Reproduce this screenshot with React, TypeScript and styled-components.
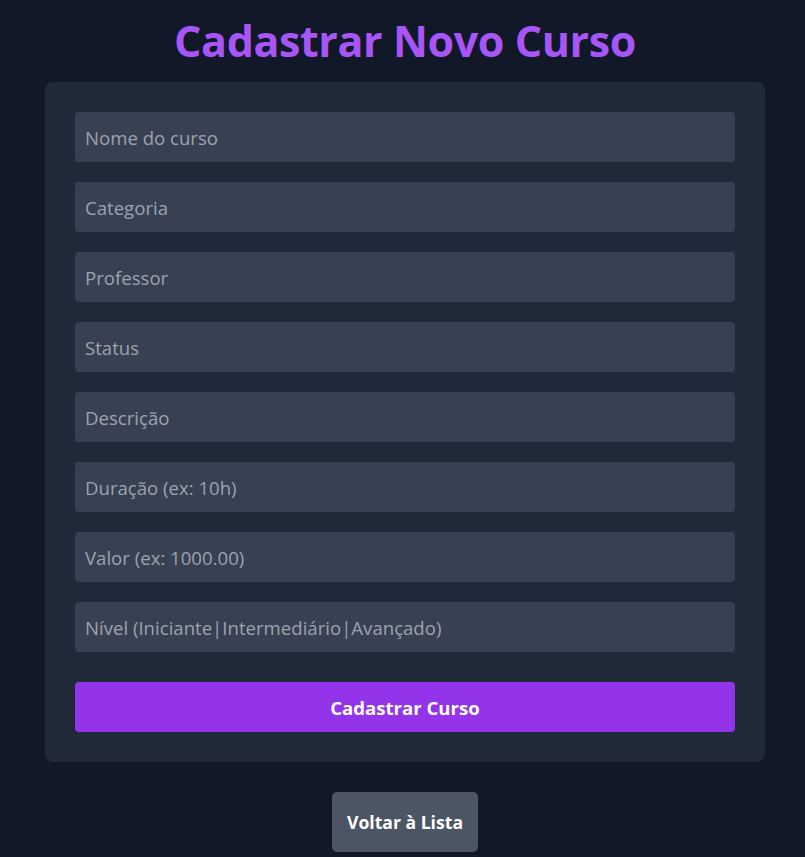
import React from "react";
import styled, { createGlobalStyle } from "styled-components";

const Global = createGlobalStyle`
  html, body { margin: 0; padding: 0; background: #111827; }
  body { font-family: "Open Sans", "Noto Sans", sans-serif; color: #fff; }
  * { box-sizing: border-box; }
`;

const Page = styled.div`
  display: flex;
  flex-direction: column;
  align-items: center;
  padding: 16px 0 5px 5px;
`;

const Title = styled.h1`
  margin: 0 0 16px;
  height: 50px;
  line-height: 50px;
  font-size: 43px;
  font-weight: 700;
  color: #a855f7;
  letter-spacing: -0.4px;
`;

const Card = styled.form`
  width: 720px;
  background: #1f2937;
  border-radius: 8px;
  padding: 30px;
  display: flex;
  flex-direction: column;
  gap: 20px;
`;

const Field = styled.input`
  height: 50px;
  width: 100%;
  border: none;
  outline: none;
  border-radius: 4px;
  background: #374151;
  color: #fff;
  padding: 0 10px;
  font-family: inherit;
  font-size: 18.6px;
  &::placeholder { color: #9ca3af; opacity: 1; }
`;

const Submit = styled.button`
  height: 50px;
  margin-top: 10px;
  border: none;
  border-radius: 4px;
  background: #9333ea;
  color: #fff;
  font-family: inherit;
  font-size: 18.6px;
  font-weight: 700;
  cursor: pointer;
`;

const Back = styled.button`
  margin-top: 30px;
  height: 60px;
  padding: 0 15px;
  border: none;
  border-radius: 5px;
  background: #4b5563;
  color: #fff;
  font-family: inherit;
  font-size: 17.6px;
  font-weight: 700;
  cursor: pointer;
`;

const fields = [
  "Nome do curso",
  "Categoria",
  "Professor",
  "Status",
  "Descrição",
  "Duração (ex: 10h)",
  "Valor (ex: 1000.00)",
  "Nível (Iniciante|Intermediário|Avançado)",
];

export default function App() {
  return (
    <>
      <Global />
      <Page>
        <Title>Cadastrar Novo Curso</Title>
        <Card onSubmit={(e) => e.preventDefault()}>
          {fields.map((f) => (
            <Field key={f} placeholder={f} />
          ))}
          <Submit type="submit">Cadastrar Curso</Submit>
        </Card>
        <Back>Voltar à Lista</Back>
      </Page>
    </>
  );
}
